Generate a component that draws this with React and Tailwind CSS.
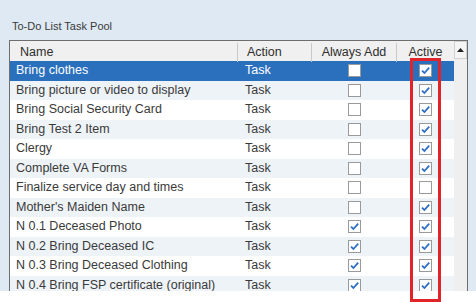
// To-Do List Task Pool — grid with Always Add / Active checkbox columns
const rows = [
  { name: 'Bring clothes', always: false, active: true },
  { name: 'Bring picture or video to display', always: false, active: true },
  { name: 'Bring Social Security Card', always: false, active: true },
  { name: 'Bring Test 2 Item', always: false, active: true },
  { name: 'Clergy', always: false, active: true },
  { name: 'Complete VA Forms', always: false, active: true },
  { name: 'Finalize service day and times', always: false, active: false },
  { name: "Mother's Maiden Name", always: false, active: true },
  { name: 'N 0.1 Deceased Photo', always: true, active: true },
  { name: 'N 0.2 Bring Deceased IC', always: true, active: true },
  { name: 'N 0.3 Bring Deceased Clothing', always: true, active: true },
  { name: 'N 0.4 Bring FSP certificate (original)', always: true, active: true },
];

const cols = 'grid grid-cols-[228px_74px_85px_57px]';

const CheckBox = ({ checked }) => (
  <div className="w-[13px] h-[13px] bg-white border border-[#9a9a9a] flex items-center justify-center">
    {checked && (
      <svg width="11" height="11" viewBox="0 0 11 11">
        <path d="M2 5.6 L4.4 8 L9.2 2.6" fill="none" stroke="#2f6fc6" strokeWidth="1.8" />
      </svg>
    )}
  </div>
);

const App = () => {
  return (
    <div className="relative w-[476px] h-[302px] bg-white overflow-hidden font-['Liberation_Sans',Arial,sans-serif]">
      <div className="h-[291px] bg-[#dfe9f4] pl-[9px] pr-[8px] flex flex-col">
        <div className="h-[40px] flex items-center pl-[3px] pt-[12px] text-[11px] text-[#3a3a3a]">To-Do List Task Pool</div>

        <div className="flex-1 flex border border-[#6e6e6e] border-b-0 bg-white overflow-hidden">
          <div className="flex-1">
            {/* Header */}
            <div className={`${cols} h-[20px] bg-[#f0f0f0] text-[12.5px] text-[#2e2e2e]`}>
              <div className="pl-[10px] flex items-center border-r border-[#c9c9c9] my-[2px]">Name</div>
              <div className="pl-[9px] flex items-center border-r border-[#c9c9c9] my-[2px]">Action</div>
              <div className="flex items-center justify-center border-r border-[#c9c9c9] my-[2px]">Always Add</div>
              <div className="flex items-center justify-center my-[2px]">Active</div>
            </div>

            {rows.map((r, i) => (
              <div
                key={r.name}
                className={`${cols} h-[19.5px] text-[12.5px] ${
                  i === 0 ? 'bg-[#2b70bd] text-white' : i % 2 ? 'bg-[#eef3f8] text-[#3a3a3a]' : 'bg-white text-[#3a3a3a]'
                }`}
              >
                <div className="pl-[6px] flex items-center whitespace-nowrap">{r.name}</div>
                <div className="pl-[7px] flex items-center">Task</div>
                <div className="flex items-center justify-center"><CheckBox checked={r.always} /></div>
                <div className="flex items-center justify-center"><CheckBox checked={r.active} /></div>
              </div>
            ))}
          </div>

          {/* Scrollbar */}
          <div className="w-[13px] bg-[#efefef] flex flex-col">
            <div className="h-[18px] bg-[#f5f5f5] border border-[#d0d0d0] flex items-center justify-center">
              <svg width="7" height="4" viewBox="0 0 7 4"><path d="M0 4 L3.5 0 L7 4 Z" fill="#222" /></svg>
            </div>
          </div>
        </div>
      </div>

      {/* Annotation box over the Active column */}
      <div className="absolute left-[410px] top-[58px] w-[31px] h-[244px] border-[3px] border-[#e0242a]" />
    </div>
  );
};

export default App;
